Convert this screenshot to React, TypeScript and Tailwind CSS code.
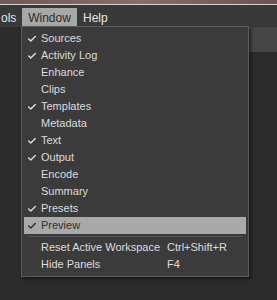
import { Check } from "lucide-react";

const items = [
  { label: "Sources", checked: true },
  { label: "Activity Log", checked: true },
  { label: "Enhance", checked: false },
  { label: "Clips", checked: false },
  { label: "Templates", checked: true },
  { label: "Metadata", checked: false },
  { label: "Text", checked: true },
  { label: "Output", checked: true },
  { label: "Encode", checked: false },
  { label: "Summary", checked: false },
  { label: "Presets", checked: true },
  { label: "Preview", checked: true, active: true },
];

export default function App() {
  return (
    <div
      className="relative w-[277px] h-[300px] overflow-hidden bg-[#2c2c2c] text-[11px] text-[#dcdcdc]"
      style={{ fontFamily: '"Liberation Sans", Tahoma, sans-serif' }}
    >
      {/* top window strip */}
      <div className="h-[4px] bg-gradient-to-r from-[#6e5a58] via-[#8a6e68] to-[#6a5450]" />
      <div className="h-px bg-[#d8d0ce]" />

      {/* menubar */}
      <div className="h-[22px] bg-[#393939] flex items-end text-[12px] text-[#e6e6e6]">
        <div className="pl-[1px] w-[22px] h-[19px] flex items-center">ols</div>
        <div className="w-[55px] h-[19px] bg-[#a8a8a8] text-[#2a2a2a] flex items-center justify-center">
          Window
        </div>
        <div className="pl-[6px] h-[19px] flex items-center">Help</div>
      </div>

      {/* panel behind */}
      <div className="flex">
        <div className="w-[249px]" />
        <div className="flex-1 h-[25px] bg-[#464646]" />
      </div>

      {/* dropdown */}
      <div className="absolute left-[21px] top-[26px] w-[228px] bg-[#3b3b3b] border border-[#5c5c5c] shadow-[2px_2px_3px_rgba(0,0,0,0.5)] pt-[3px] pb-[3px] px-[2px]">
        {items.map((it) => (
          <div
            key={it.label}
            className={`h-[17px] flex items-center ${
              it.active ? "bg-[#a9a9a9] text-[#2e2e2e]" : ""
            }`}
          >
            <div className="w-[15px] flex justify-center">
              {it.checked && <Check className="w-[10px] h-[10px]" strokeWidth={3.5} />}
            </div>
            <span className="pl-[2px]">{it.label}</span>
          </div>
        ))}
        <div className="h-[5px] flex items-center px-[3px]">
          <div className="h-px w-full bg-[#565656]" />
        </div>
        <div className="h-[17px] flex items-center pl-[17px]">
          <span className="w-[126px]">Reset Active Workspace</span>
          <span>Ctrl+Shift+R</span>
        </div>
        <div className="h-[17px] flex items-center pl-[17px]">
          <span className="w-[126px]">Hide Panels</span>
          <span>F4</span>
        </div>
      </div>
    </div>
  );
}
